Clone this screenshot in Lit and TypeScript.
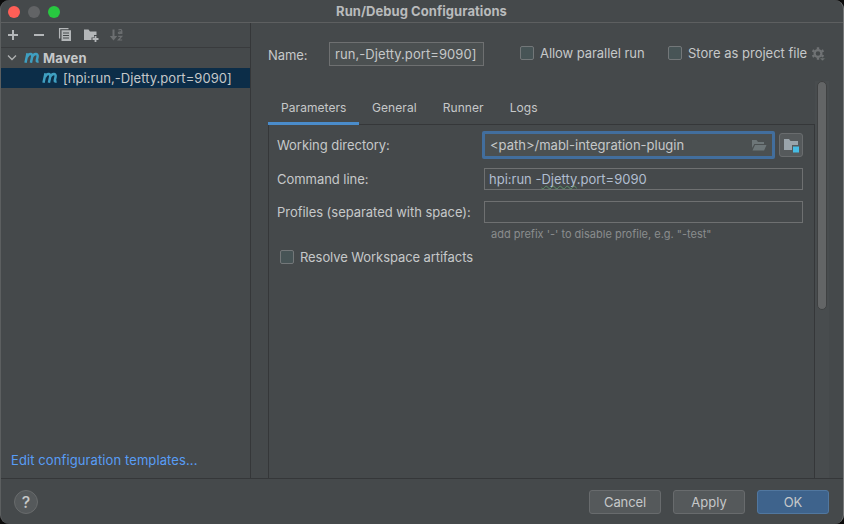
import { LitElement, html, css } from "lit";
import { customElement } from "lit/decorators.js";

const mavenIcon = html`<svg class="maven" width="16" height="12" viewBox="0 0 16 12">
  <path d="M1.5 10.8L3.5 1.2M3.1 5C4.6 1.5 9 .8 8.2 4.8L6.9 10.8M8.1 5C9.8 1.5 14.4 .8 13.6 4.8L12.8 8.6Q12.6 9.8 14.6 9.5"
    fill="none" stroke="#3f9fc1" stroke-width="2.5"/></svg>`;

@customElement("app-root")
export class AppRoot extends LitElement {
  static styles = css`
    :host { display: block; width: 844px; height: 524px; background: #0b0b0b; overflow: hidden; }
    * { box-sizing: border-box; }
    svg { display: block; flex: none; }
    .window {
      width: 844px; height: 524px; display: flex; flex-direction: column; background: #45494b;
      border-radius: 9px; overflow: hidden; border-left: 1px solid #5c5f60; border-right: 1px solid #77797a;
      color: #c6c8c9; font: 13px/16px Inter, "Liberation Sans", sans-serif; white-space: nowrap;
    }
    .titlebar { height: 23px; flex: none; border-bottom: 1px solid #5d5f60; display: grid; grid-template-columns: 1fr auto 1fr; align-items: center; }
    .lights { display: flex; gap: 8px; padding: 1px 0 0 7px; }
    .light { width: 12px; height: 12px; border-radius: 50%; background: #626466; }
    .close { background: #ff5f57; }
    .zoom { background: #28c840; }
    .title { font-weight: 700; color: #b9bbbc; letter-spacing: .05px; margin-right: 1px; }
    .body { height: 455px; flex: none; display: flex; }
    .side { width: 250px; flex: none; border-right: 1px solid #353739; display: flex; flex-direction: column; }
    .tools { height: 25px; border-bottom: 1px solid #393b3d; display: flex; align-items: center; gap: 10px; padding-left: 4px; }
    .row { height: 20px; display: flex; align-items: center; }
    .group { padding-left: 5px; font-weight: 700; }
    .group .maven { margin: 0 3px 0 6px; }
    .maventext { letter-spacing: .2px; }
    .selected { background: #0c2d48; padding-left: 41px; }
    .selected .maven { margin-right: 5px; }
    .treetext { letter-spacing: .06px; }
    .edit { margin-top: auto; padding: 0 0 10px 10px; color: #589df6; letter-spacing: .1px; }
    .main { flex: 1; min-width: 0; padding-left: 17px; display: flex; flex-direction: column; }
    .head { height: 58px; padding-top: 4px; display: flex; align-items: center; }
    .namelabel { width: 61px; letter-spacing: -.1px; padding-top: 1px; }
    .field { border: 1px solid #6e7071; display: flex; align-items: center; }
    .name { width: 155px; height: 24px; padding-left: 5px; background: #4b5051; margin-right: 36px; letter-spacing: .07px; }
    .check { width: 14px; height: 14px; flex: none; border: 1px solid #737779; border-radius: 2px; background: #475456; margin-right: 6px; }
    .opt { display: flex; align-items: center; height: 18px; }
    .head .opt { margin-top: -2px; }
    .parallel { width: 148px; letter-spacing: -.06px; }
    .store { width: 142px; }
    .scroll { flex: 1; display: flex; min-height: 0; }
    .content { width: 547px; display: flex; flex-direction: column; }
    .tabs { height: 44px; flex: none; display: flex; font-size: 12px; letter-spacing: .07px; align-items: stretch; }
    .tab { height: 44px; padding: 19px 13px 0; }
    .active { border-bottom: 3px solid #4a8ccb; width: 91px; position: relative; z-index: 1; }
    .panel { flex: 1; margin-top: -1px; border: 1px solid #353739; border-bottom: 0; padding: 6px 0 0 8px; }
    .form { display: grid; grid-template-columns: 205px 321px; grid-template-rows: 28px 9px 22px 11px 22px; align-items: center; }
    .label { grid-column: 1; letter-spacing: -.04px; }
    .input { grid-column: 2; }
    .first { grid-row: 1; }
    .command { grid-row: 3; }
    .profiles { grid-row: 5; }
    .working { display: flex; gap: 4px; align-items: center; }
    .path { width: 293px; height: 28px; border: 3px solid #426e9d; border-radius: 2px; background: #4b5051; padding: 0 5px 0 5px; justify-content: space-between; }
    .browse { width: 24px; height: 24px; border: 1px solid #696c6e; border-radius: 3px; background: #55595b; display: grid; place-items: center; }
    .box { width: 319px; height: 22px; margin-left: 2px; padding-left: 4px; color: #b1bed0; }
    .typo { text-decoration: underline wavy #5b9168 1px; text-underline-offset: 1px; text-decoration-skip-ink: none; }
    .hint { font-size: 11px; line-height: 16px; color: #8a8d8e; padding: 3px 0 0 214px; height: 27px; }
    .resolve { padding-left: 3px; margin-top: -2px; letter-spacing: -.08px; }
    .track { width: 14px; background: #484c4e; padding: 0 2px 0 2px; }
    .thumb { width: 10px; height: 229px; border: 1px solid #3f4142; border-radius: 5px; background: #636566; }
    .footer { flex: 1; border-top: 1px solid #353739; display: flex; align-items: center; gap: 12px; padding: 1px 14px 0 13px; }
    .help { width: 24px; height: 24px; border-radius: 50%; border: 1px solid #686b6c; background: #55595b; display: grid; place-items: center; font-size: 16px; font-weight: 500; margin-right: auto; }
    .btn { width: 72px; height: 24px; border: 1px solid #686b6d; border-radius: 3px; background: #55595b; display: grid; place-items: center; }
    .cancel { letter-spacing: -.1px; }
    .ok { background: #3e638c; border-color: #51779f; }
  `;

  render() {
    return html`<div class="window">
      <div class="titlebar">
        <div class="lights"><span class="light close"></span><span class="light"></span><span class="light zoom"></span></div>
        <span class="title">Run/Debug Configurations</span>
      </div>
      <div class="body">
        <div class="side">
          <div class="tools">
            <svg width="16" height="16"><path d="M8 3v10M3 8h10" stroke="#b4b7b9" stroke-width="2"/></svg>
            <svg width="16" height="16"><path d="M3 8h10" stroke="#b4b7b9" stroke-width="2"/></svg>
            <svg width="16" height="16"><path d="M2.6 11.5V1.6H11.5" fill="none" stroke="#b4b7b9" stroke-width="1.3"/><path fill="#b4b7b9" fill-rule="evenodd" d="M4.5 3.2H14V14H4.5zM6 5.5v1h6v-1zm0 2.5v1h6v-1zm0 2.5v1h6v-1z"/></svg>
            <svg width="16" height="16"><path fill="#b4b7b9" d="M1 2.5h4.5L7 4.5h6.5v3.5H11v2.5H8.500v2.500H1z"/><path d="M12.500 9v6M9.500 12h6" stroke="#b4b7b9" stroke-width="1.8"/></svg>
            <svg width="16" height="16"><path d="M4.500 2.500v8" stroke="#6c6f71" stroke-width="2"/><path d="M.8 9h7.400l-3.700 4.500z" fill="#6c6f71"/><path d="M9.500 2.900q3.300-1.100 3.300 1v3M12.800 4.800c-4.500-.2-4 1.800-2.100 1.800 1.200 0 2.100-.6 2.100-1.500M9.200 9.400h3.500L9.400 13h3.800" fill="none" stroke="#6c6f71" stroke-width="1.200"/></svg>
          </div>
          <div class="row group"><svg width="12" height="12"><path d="M2 3.500l4 4 4-4" fill="none" stroke="#b0b2b3" stroke-width="1.300"/></svg>${mavenIcon}<span class="maventext">Maven</span></div>
          <div class="row selected">${mavenIcon}<span class="treetext">[hpi:run,-Djetty.port=9090]</span></div>
          <div class="edit"><span>Edit configuration templates...</span></div>
        </div>
        <div class="main">
          <div class="head">
            <span class="namelabel">Name:</span>
            <div class="field name"><span>run,-Djetty.port=9090]</span></div>
            <div class="opt parallel"><i class="check"></i><span>Allow parallel run</span></div>
            <div class="opt store"><i class="check"></i><span>Store as project file</span></div>
            <svg width="16" height="16"><g fill="none" stroke="#6f7274"><circle cx="8" cy="7.500" r="3.400" stroke-width="2.200"/><path stroke-width="2.400" d="M8 1.200v2M8 11.800v2M2.500 4.400l1.800 1M11.700 9.600l1.800 1M13.500 4.400l-1.800 1M4.300 9.600l-1.800 1"/></g><path d="M9.500 12h6l-3 3z" fill="#6f7274" stroke="#45494b" stroke-width=".6"/></svg>
          </div>
          <div class="scroll">
            <div class="content">
              <div class="tabs"><div class="tab active">Parameters</div><div class="tab">General</div><div class="tab">Runner</div><div class="tab">Logs</div></div>
              <div class="panel">
                <div class="form">
                  <span class="label first">Working directory:</span>
                  <div class="input working first">
                    <div class="field path"><span>&lt;path&gt;/mabl-integration-plugin</span>
                      <svg width="16" height="14"><path fill="#6d7678" d="M1 2h4.500l1.500 2h6v2H3.400L1 10zM4 7h11.500l-2.400 5.500H1.500z"/></svg></div>
                    <div class="browse"><svg width="16" height="16"><path fill="#9aa4ab" d="M1 2h5l1.500 2H15v4H9v5H1z"/><path fill="#46bce4" d="M10 9.500h6V15.500h-6z"/></svg></div>
                  </div>
                  <span class="label command">Command line:</span>
                  <div class="input field box command"><span>hpi:run -<span class="typo">Djetty</span>.port=9090</span></div>
                  <span class="label profiles">Profiles (separated with space):</span>
                  <div class="input field box profiles"></div>
                </div>
                <div class="hint">add prefix '-' to disable profile, e.g. "-test"</div>
                <div class="opt resolve"><i class="check"></i><span>Resolve Workspace artifacts</span></div>
              </div>
            </div>
            <div class="track"><div class="thumb"></div></div>
          </div>
        </div>
      </div>
      <div class="footer"><div class="help">?</div><div class="btn cancel">Cancel</div><div class="btn">Apply</div><div class="btn ok">OK</div></div>
    </div>`;
  }
}
